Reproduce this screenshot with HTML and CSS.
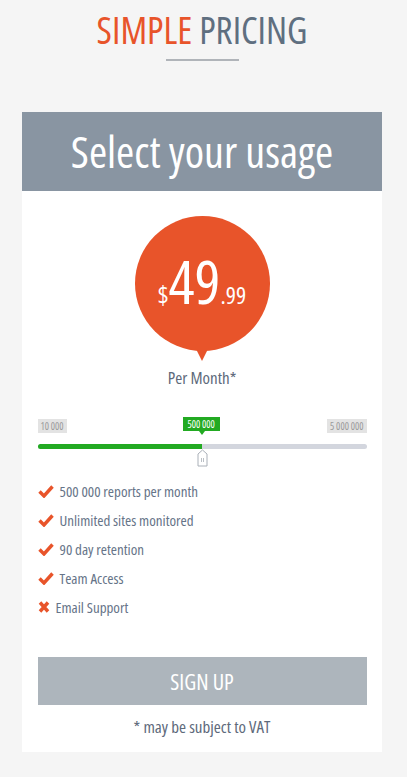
FILE: index.html
```html
<!DOCTYPE html>
<html>
<head>
<meta charset="utf-8">
<link rel="stylesheet" href="styles.css">
</head>
<body>
<div class="page">
  <h1 class="title"><span class="accent">SIMPLE</span> PRICING</h1>
  <div class="rule"></div>
  <div class="card">
    <div class="card-head">Select your usage</div>
    <div class="card-body">
      <div class="bubble">
        <div class="price"><span class="cur">$</span><span class="big">49</span><span class="cents">.99</span></div>
      </div>
      <div class="per">Per Month*</div>
      <div class="slider">
        <div class="labels">
          <span class="lab">10 000</span>
          <span class="lab">5 000 000</span>
          <span class="val">500 000</span>
        </div>
        <div class="track"><div class="fill" style="width:50%"></div>
          <div class="handle"><svg width="11" height="18" viewBox="0 0 11 18"><path d="M1 5 L5.5 1 L10 5 L10 17 L1 17 Z" fill="#fff" stroke="#aab0b8" stroke-width="1"/><path d="M4.5 9v4M6.5 9v4" stroke="#aab0b8" stroke-width="0.8"/></svg></div>
        </div>
      </div>
      <ul class="features">
        <li><svg class="ic" viewBox="0 0 16 14"><path d="M1.5 7.5 L6 12 L14.5 2.5" fill="none" stroke="#e8542a" stroke-width="3.4"/></svg>500 000 reports per month</li>
        <li><svg class="ic" viewBox="0 0 16 14"><path d="M1.5 7.5 L6 12 L14.5 2.5" fill="none" stroke="#e8542a" stroke-width="3.4"/></svg>Unlimited sites monitored</li>
        <li><svg class="ic" viewBox="0 0 16 14"><path d="M1.5 7.5 L6 12 L14.5 2.5" fill="none" stroke="#e8542a" stroke-width="3.4"/></svg>90 day retention</li>
        <li><svg class="ic" viewBox="0 0 16 14"><path d="M1.5 7.5 L6 12 L14.5 2.5" fill="none" stroke="#e8542a" stroke-width="3.4"/></svg>Team Access</li>
        <li><svg class="ic x" viewBox="0 0 12 14"><path d="M2 2.5 L10 11.5 M10 2.5 L2 11.5" fill="none" stroke="#e8542a" stroke-width="3.4"/></svg>Email Support</li>
      </ul>
      <button class="signup">SIGN UP</button>
      <div class="vat">* may be subject to VAT</div>
    </div>
  </div>
</div>
</body>
</html>
```

FILE: styles.css
```css
html, body { margin: 0; padding: 0; }
body {
  background: #f5f5f5;
  font-family: "Open Sans", "Liberation Sans Narrow", sans-serif;
  font-stretch: 75%;
  color: #667488;
}
.page { width: 404px; display: flex; flex-direction: column; align-items: center; }
.title {
  margin: 9px 0 0;
  font-size: 37.5px;
  font-weight: normal;
  color: #5f6f80;
  line-height: 42px;
}
.accent { color: #e8542a; }
.rule { width: 73px; height: 2px; background: #b0b4b9; margin-top: 8px; }
.card { width: 360px; margin-top: 51px; background: #fff; }
.card-head {
  height: 79px; background: #8995a2; color: #fff;
  font-size: 44px; display: flex; align-items: center; justify-content: center;
  padding-bottom: 2px; box-sizing: border-box;
}
.card-body { padding: 25px 15px 14px; display: flex; flex-direction: column; align-items: center; }
.bubble {
  width: 135px; height: 135px; border-radius: 50%; background: #e8542a;
  position: relative; display: flex; align-items: center; justify-content: center;
}
.bubble::after {
  content: ""; position: absolute; left: 60px; bottom: -10px;
  border-left: 7.5px solid transparent; border-right: 7.5px solid transparent;
  border-top: 14px solid #e8542a;
}
.price { color: #fff; display: flex; align-items: baseline; margin-top: -6px; }
.cur { font-size: 25px; }
.big { font-size: 61px; line-height: 1; }
.cents { font-size: 24px; }
.per { margin-top: 15px; font-size: 17px; color: #5e6a7b; }
.slider { width: 329px; margin-top: 30px; position: relative; }
.labels { display: flex; justify-content: space-between; height: 14px; position: relative; }
.lab { background: #e3e3e3; color: #9a9a9a; font-size: 10px; line-height: 14px; padding: 0 3px; }
.val {
  position: absolute; left: 145px; top: -2px; background: #22aa22; color: #fff;
  font-size: 10px; line-height: 14px; padding: 0 5px;
}
.val::after {
  content: ""; position: absolute; left: 16px; bottom: -4px;
  border-left: 3px solid transparent; border-right: 3px solid transparent; border-top: 4px solid #22aa22;
}
.track { margin-top: 11px; height: 5px; border-radius: 3px; background: #d3d6de; position: relative; }
.fill { height: 5px; border-radius: 3px 0 0 3px; background: #22aa22; }
.handle { position: absolute; left: 159px; top: 5px; width: 11px; height: 18px; }
.handle svg { display: block; }
.features { list-style: none; margin: 27px 0 0; padding: 0; width: 329px; }
.features li { display: flex; align-items: center; height: 29px; font-size: 15px; color: #667488; }
.ic { width: 16px; height: 14px; margin-right: 6px; flex: none; }
.ic.x { width: 12px; margin-right: 6px; }
.signup {
  margin-top: 36px; width: 329px; height: 48px; border: 0; background: #adb5bc;
  color: #fff; font-family: inherit; font-stretch: inherit; font-size: 22px; padding: 0;
}
.vat { margin-top: 10px; font-size: 17px; color: #5e6a7b; }
```
